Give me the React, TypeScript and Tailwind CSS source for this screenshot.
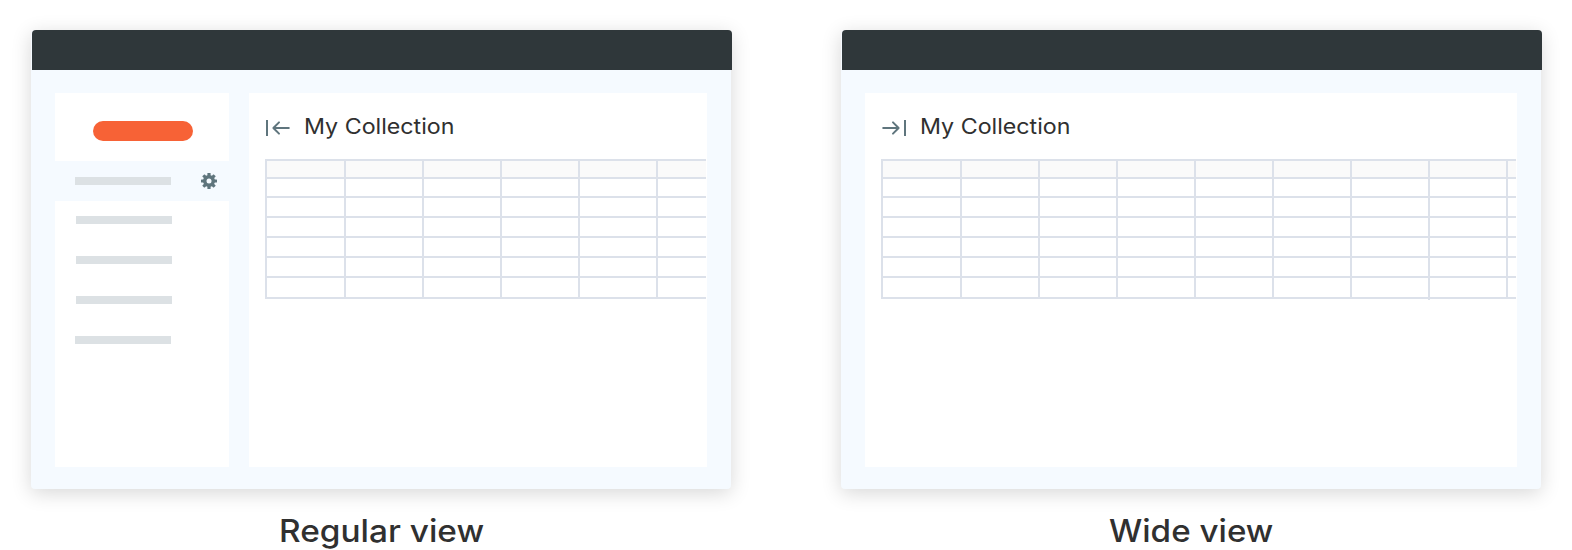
import type { ReactNode } from "react";

function CollapseIcon() {
  return (
    <svg className="h-5 w-[26px] shrink-0" viewBox="0 0 26 20" fill="none" stroke="#5f757d" strokeWidth="2">
      <path d="M2 2v16" />
      <path d="M23.8 10H9M14 4.4 8.4 10l5.6 5.6" strokeLinecap="round" strokeLinejoin="round" />
    </svg>
  );
}

function ExpandIcon() {
  return (
    <svg className="h-5 w-[26px] shrink-0" viewBox="0 0 26 20" fill="none" stroke="#5f757d" strokeWidth="2">
      <path d="M24 2v16" />
      <path d="M2.2 10h15M12 4.4 17.6 10 12 15.6" strokeLinecap="round" strokeLinejoin="round" />
    </svg>
  );
}

function GearIcon() {
  const angles = [0, 45, 90, 135];
  return (
    <svg className="size-4" viewBox="-8 -8 16 16" fill="#5f757d">
      {angles.map((a) => (
        <rect key={a} x="-1.6" y="-8" width="3.2" height="16" rx="0.5" transform={`rotate(${a})`} />
      ))}
      <circle r="6" />
      <circle r="2.5" fill="#f5faff" />
    </svg>
  );
}

const rows = ["h-[18px] bg-[#fafafa]", "h-[19px]", "h-5", "h-5", "h-5", "h-5", "h-[21px]"];

function Table({ columns }: { columns: number }) {
  return (
    <div className="mr-px overflow-x-clip border-t-2 border-l-2 border-[#dce1ea]">
      {rows.map((row, r) => (
        <div key={r} className={`flex border-b-2 border-[#dce1ea] ${row}`}>
          {Array.from({ length: columns }, (_, c) => (
            <div
              key={c}
              className={`shrink-0 border-r-2 border-[#dce1ea] ${c === 0 ? "w-[79px]" : "w-[78px]"} ${
                c === 6 && r === rows.length - 1 ? "-mb-[3px]" : ""
              }`}
            />
          ))}
        </div>
      ))}
    </div>
  );
}

function Collection({ icon, columns }: { icon: ReactNode; columns: number }) {
  return (
    <main className="min-w-0 flex-1 bg-white pl-4">
      <div className="flex h-[66px] items-center pt-1">
        {icon}
        <h1 className="-mt-1 ml-[13px] origin-left scale-x-[1.08] font-['Inter',sans-serif] text-[21.5px] leading-7 whitespace-nowrap text-[#303030]">
          My Collection
        </h1>
      </div>
      <Table columns={columns} />
    </main>
  );
}

function Sidebar() {
  return (
    <aside className="mr-5 w-[174px] shrink-0 bg-white">
      <div className="flex h-[68px] pt-[27.5px] pl-[38px]">
        <div className="h-[20.5px] w-[100px] rounded-full bg-[#f76236]" />
      </div>
      <div className="flex h-[39.5px] items-center justify-between bg-[#f5faff] pr-3 pl-5">
        <div className="h-2 w-24 bg-[#dce1e4]" />
        <GearIcon />
      </div>
      <div className="flex flex-col gap-8 pt-[15.5px] pl-[21px]">
        <div className="h-2 w-24 bg-[#dce1e4]" />
        <div className="h-2 w-24 bg-[#dce1e4]" />
        <div className="h-2 w-24 bg-[#dce1e4]" />
        <div className="-ml-px h-2 w-24 bg-[#dce1e4]" />
      </div>
    </aside>
  );
}

function View({ children, caption }: { children: ReactNode; caption: ReactNode }) {
  return (
    <section className="w-[700px] shrink-0">
      <div className="flex h-[459px] flex-col rounded-[4px] bg-[#f5faff] shadow-[0_4px_20px_rgba(0,0,0,0.16)]">
        <div className="-mr-px ml-px h-10 shrink-0 rounded-t-[4px] bg-[#2f373a]" />
        <div className="flex flex-1 px-6 pt-[23px] pb-[22px]">{children}</div>
      </div>
      {caption}
    </section>
  );
}

export default function App() {
  return (
    <div className="flex h-[550px] gap-[110px] overflow-hidden bg-white pt-[30px] pl-[31px]">
      <View
        caption={
          <p className="mt-[22px] ml-[248px] origin-left scale-x-[1.077] font-['Inter',sans-serif] text-[31px] leading-10 font-medium whitespace-nowrap text-[#303030]">
            Regular view
          </p>
        }
      >
        <Sidebar />
        <Collection icon={<CollapseIcon />} columns={6} />
      </View>
      <View
        caption={
          <p className="mt-[22px] ml-[268px] origin-left scale-x-[1.07] font-['Inter',sans-serif] text-[31px] leading-10 font-medium whitespace-nowrap text-[#303030]">
            Wide view
          </p>
        }
      >
        <Collection icon={<ExpandIcon />} columns={9} />
      </View>
    </div>
  );
}
